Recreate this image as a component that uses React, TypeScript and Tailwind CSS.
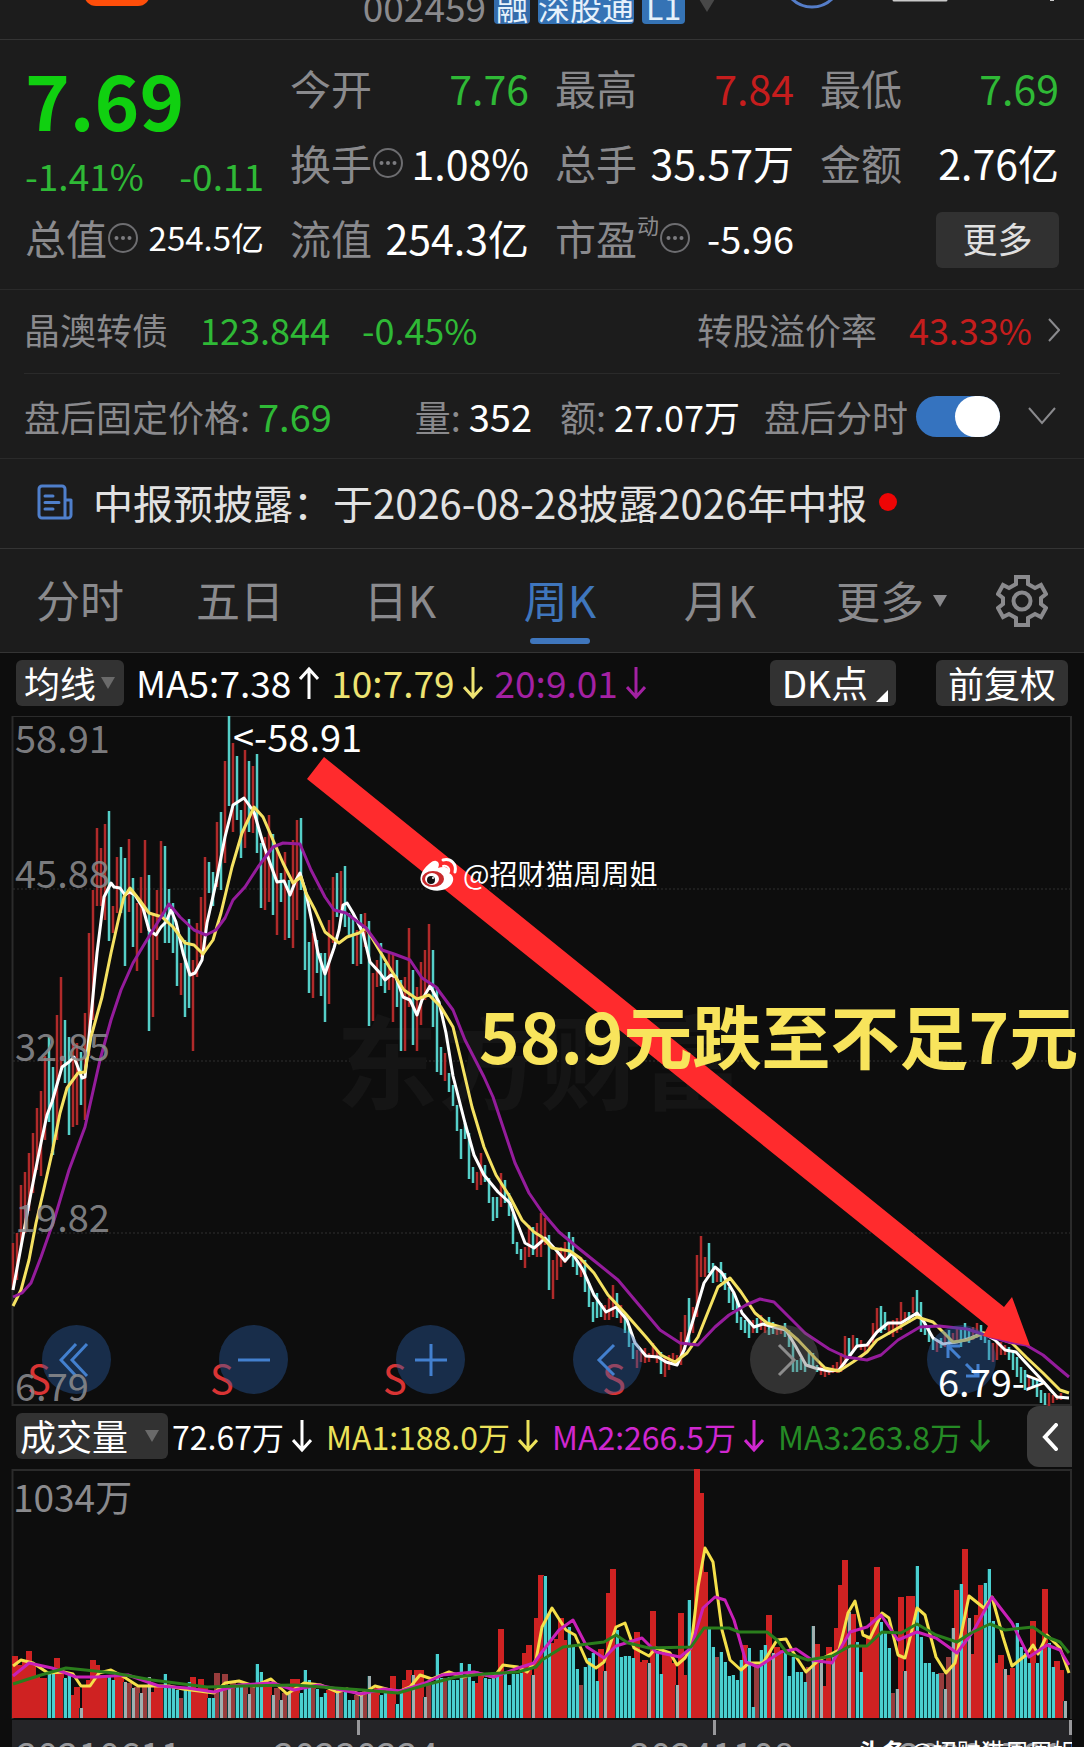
import { useState } from "react";
import type { ReactNode } from "react";

// weekly candles: colour, high, low (y in chart units)
const candles =
  "R527,574 R517,564 R469,531 R456,517 R437,495 R417,477 R392,454 R375,460 R340,424 C321,406 C351,439 R299,424 R261,354 C304,367 C321,419 R321,411 R327,409 C336,389 R297,404 R217,340 R174,304 R112,190 R132,190 R108,204 C95,225 R190,217 R141,197 C131,197 C142,250 R123,196 C162,231 R187,255 R161,217 R124,197 C159,315 R197,301 R174,244 R125,201 C130,227 C173,227 C187,237 C217,270 R247,279 C224,301 C203,292 R244,335 R207,261 R181,241 R141,234 C146,177 C156,190 R106,171 C96,174 R45,147 C0,90 R27,116 C40,104 C94,142 R34,132 C45,116 R50,117 C38,137 C127,192 R121,194 R99,186 C118,199 " +
  "R131,219 C157,186 R136,224 C164,222 R124,232 R104,204 C102,174 C171,254 C226,277 R217,282 C224,257 C237,280 C237,306 R204,288 R161,227 C157,201 R155,197 C150,211 C197,221 C201,248 R214,250 C198,248 R197,231 C205,310 R257,305 R244,271 C227,270 C247,277 R237,274 R239,306 C244,291 C264,335 R261,335 R212,291 C254,329 R271,335 R246,309 R234,284 R208,271 C234,311 C271,356 C331,359 R337,365 C357,376 C369,390 C389,415 C413,443 C407,423 C417,463 C451,467 R456,474 R437,469 C449,466 C462,487 C481,505 C481,502 R457,491 C464,487 C477,500 C497,528 C526,538 C533,544 R531,552 R509,541 C511,539 R507,541 " +
  "R497,541 R502,529 C519,574 R544,583 R537,564 R531,551 R526,547 C516,541 C521,551 C544,559 R541,561 C544,576 C567,591 C586,606 C577,602 C587,601 R589,604 R582,604 R569,601 C577,602 R589,607 C597,617 C611,631 C627,643 R634,652 R634,646 R632,647 R637,646 R627,642 R634,647 C636,658 R641,661 R639,654 R637,647 R639,649 R616,649 R599,634 C582,627 R591,617 R539,601 R520,561 R541,561 C527,557 C547,567 R552,566 C546,566 C557,574 C571,587 C577,594 C584,607 C601,614 C604,617 C604,622 R604,617 C602,617 R599,614 R604,617 C601,619 C606,618 R609,619 R611,618 C607,621 C614,631 C627,656 " +
  "C644,656 C642,654 C646,656 C634,651 C637,651 C649,656 R649,659 R651,661 R652,659 R649,657 R646,657 R637,656 R620,649 C622,639 R619,634 C622,632 R624,634 R629,637 R626,632 R607,627 R592,614 C590,617 C596,614 R606,619 R604,621 R602,617 R586,614 R596,609 C596,607 R581,597 C574,601 C586,616 C607,619 C611,626 C621,634 R624,636 C622,632 R616,631 C614,632 R617,627 R611,626 C611,631 C607,622 C612,627 R611,624 R607,622 C609,624 C616,627 C624,644 R627,646 R626,644 R626,639 R629,639 C631,644 C634,654 C641,661 C651,667 C654,674 R661,674 C661,671 C664,681 C674,687 C677,689 R677,690 R679,687 R679,684 R677,684";

// weekly volume: colour, top edge
const volumes =
  "R187 R198 R196 R193 R182 R194 R206 R209 R209 C203 C203 R189 R199 C209 C206 R226 R218 C239 R218 R211 R191 R196 R206 R206 C208 C211 R204 R208 C213 R214 C219 R218 C224 R218 C208 R223 R218 R218 C205 C216 C219 C221 R229 C219 C213 R208 R221 R210 R218 C229 C229 R204 C219 R205 C219 R214 C216 C218 R218 C225 R216 C195 C203 R214 R213 C226 R219 C231 R224 C224 R210 R210 C224 C201 C211 R214 C220 C228 C224 R221 R221 C224 R219 C223 C231 C231 R226 C223 R221 " +
  "C207 R221 R219 C226 C224 R219 R207 C235 C221 R211 R201 C206 R201 R201 C228 R214 C214 C185 C209 R209 C208 C211 C211 C194 R208 C195 C212 R214 R206 C209 C210 C209 C206 R160 C204 C216 C205 C205 C204 R184 R176 C206 R149 R106 C107 C144 R174 R170 R149 R171 C158 C176 C200 R216 C198 C189 C184 C212 R180 C202 R124 R100 C161 C188 C187 C187 C189 R163 R193 R191 C194 R142 C184 C205 R184 R184 R194 C216 R144 R206 C131 R164 R0 R24 R103 C159 C178 R188 C183 " +
  "C193 C207 C206 C211 C191 R176 C179 C238 R198 C181 C176 R146 C184 R178 R181 C182 C207 C188 C203 C203 C213 R198 C157 R175 C194 R217 R178 C188 R159 R116 R91 C143 R145 C173 C203 R178 R169 R148 R98 C153 C164 C179 R224 C220 R128 C202 R127 R127 C97 C168 C194 C194 C203 C205 R204 C220 R188 C159 R121 C115 R80 C149 R185 R146 R116 C114 C100 C152 R194 R186 C200 R206 R199 C154 C178 C184 C194 R152 C194 C179 R120 C174 C198 R192 R201 C232";

const ma5 =
  "13,574 31,477 41,427 47,399 52,386 62,351 69,346 74,341 82,362 85,361 91,301 97,237 104,181 111,167 114,171 120,172 125,179 129,176 135,179 143,192 149,214 156,219 161,211 166,206 171,194 176,206 183,237 190,259 195,257 202,244 207,207 216,167 225,121 233,89 244,82 249,89 254,96 263,127 270,147 277,166 284,165 290,179 296,164 300,157 306,177 313,211 318,237 325,258 334,232 339,214 343,189 347,187 353,197 363,217 370,246 380,257 385,264 391,259 396,261 403,281 410,284 417,299 422,284 430,270 439,286 446,317 453,360 465,407 474,439 484,459 498,476 510,487 518,509 525,527 534,532 541,526 545,522 556,534 565,545 572,537 583,554 594,579 606,596 616,591 627,604 635,627 646,640 658,641 666,646 677,649 684,634 694,601 704,567 715,551 722,557 734,577 742,597 754,611 763,608 777,612 786,614 796,631 806,649 815,652 829,655 839,654 848,642 857,630 867,629 877,616 888,607 901,607 917,597 924,606 933,622 943,628 957,626 971,622 983,617 995,624 1005,634 1016,636 1026,647 1040,662 1057,681 1069,682";
const ma10 =
  "13,590 21,574 29,544 36,507 43,477 52,437 60,397 67,372 78,357 85,356 91,321 102,281 111,237 119,201 124,181 130,172 138,182 149,197 162,201 173,211 185,227 194,229 203,238 213,224 221,197 232,151 242,117 254,91 263,101 273,124 283,147 293,167 301,161 306,177 315,194 325,216 339,227 347,221 359,217 366,212 375,227 391,254 404,274 417,283 429,279 441,291 453,311 461,344 465,361 472,391 484,431 496,459 510,481 522,504 534,516 542,521 552,532 570,535 580,542 594,557 608,579 625,597 646,621 661,639 675,646 687,637 698,621 708,596 718,571 730,562 741,576 755,597 767,607 784,612 798,624 815,642 825,652 839,655 853,646 867,636 877,624 898,612 917,601 933,606 953,626 967,624 984,617 1012,627 1026,641 1043,657 1060,674 1069,677";
const ma20 =
  "13,581 22,577 31,567 41,541 55,501 69,454 85,411 100,344 111,304 121,274 133,247 145,227 161,201 169,188 180,201 194,214 206,219 216,214 225,202 233,184 245,171 258,151 273,131 283,127 300,128 311,154 325,181 334,194 346,197 366,212 382,234 394,238 410,244 422,262 436,271 453,294 465,324 484,361 493,381 505,417 515,447 529,477 542,496 559,516 577,531 597,547 618,564 639,589 660,614 680,627 698,629 715,611 729,599 746,589 760,583 774,586 787,599 805,617 829,633 846,641 867,644 881,639 898,624 920,611 939,610 967,613 991,621 1009,626 1026,629 1043,639 1057,651 1069,661";

const volMa1 =
  "13,197 21,191 33,194 48,204 64,203 73,205 81,217 90,217 99,204 111,201 124,208 138,217 156,217 169,217 183,220 199,222 214,224 225,214 239,212 254,217 271,210 287,225 304,214 321,216 337,223 347,220 361,226 375,217 398,223 410,218 420,206 432,210 449,203 463,208 477,204 494,208 503,196 518,198 527,203 536,191 542,158 552,139 566,161 575,166 587,193 596,199 604,193 616,158 625,154 634,179 649,187 656,179 670,184 677,196 685,189 691,178 698,118 705,79 713,93 722,161 730,191 741,201 749,194 763,194 777,171 786,170 793,183 806,203 819,191 829,186 839,181 848,144 855,132 863,166 870,169 882,144 889,149 898,186 905,189 912,161 917,139 925,146 936,188 946,204 955,194 962,161 969,127 984,139 992,128 1003,168 1012,197 1026,186 1033,176 1038,185 1047,166 1060,179 1069,204";
const volMa2 =
  "13,207 29,194 52,199 76,208 97,208 128,206 159,217 187,219 214,223 239,216 273,214 294,221 318,216 361,225 384,220 401,222 425,214 442,206 474,203 494,208 518,199 534,194 542,183 559,161 573,151 587,178 604,189 616,177 642,169 656,183 680,188 691,179 703,139 715,128 725,131 734,151 746,193 758,198 781,183 796,180 812,191 832,194 850,163 867,158 881,146 898,171 917,163 936,169 957,184 974,161 992,128 1012,154 1029,188 1047,176 1060,181 1069,196";
const volMa3 =
  "13,215 41,206 66,199 114,204 152,211 207,218 242,217 294,216 363,221 398,224 429,215 456,208 484,205 518,203 536,198 542,191 563,178 604,173 616,166 628,174 649,179 691,178 704,159 729,159 739,163 767,163 777,171 787,184 808,191 832,187 850,177 867,177 882,163 901,164 917,155 936,166 957,173 971,164 990,155 1005,161 1033,158 1047,168 1060,173 1069,184";

const barX = (i: number) => 13 + i * 4;

const priceBars = candles.split(" ").map((s, i) => {
  const [high, low] = s.slice(1).split(",").map(Number);
  return { x: barX(i), up: s[0] === "R", high, low };
});

const volumeBars = volumes.split(" ").map((s, i, all) => {
  const up = s[0] === "R";
  // a bar with no neighbour of its own colour is drawn muted
  const alone = all[i - 1]?.[0] !== s[0] && all[i + 1]?.[0] !== s[0];
  return { x: barX(i), up, alone, top: Number(s.slice(1)) };
});

function volumeFill(up: boolean, alone: boolean, top: number) {
  if (up) return alone && top > 180 ? "#983c3c" : "#cf2222";
  return alone && top > 140 ? "#9fb0b0" : "#4ad0d0";
}

function MoreDots() {
  return (
    <svg viewBox="0 0 32 32" className="size-8 shrink-0" fill="none" stroke="#6d6d70" strokeWidth="2">
      <circle cx="16" cy="16" r="14" />
      <g fill="#7c7c80" stroke="none">
        <circle cx="9.500" cy="16" r="2" />
        <circle cx="16" cy="16" r="2" />
        <circle cx="22.500" cy="16" r="2" />
      </g>
    </svg>
  );
}

function Trend({ up = false }: { up?: boolean }) {
  return (
    <svg viewBox="0 0 20 34" className="h-[34px] w-5 shrink-0" fill="none" stroke="currentColor" strokeWidth="3">
      {up ? <path d="M10 33V3M1 13l9-10 9 10" /> : <path d="M10 1v30M1 21l9 10 9-10" />}
    </svg>
  );
}

function Caret({ className }: { className: string }) {
  return (
    <svg viewBox="0 0 14 12" className={className} fill="currentColor">
      <path d="M0 0h14L7 12z" />
    </svg>
  );
}

interface QuoteProps {
  label: ReactNode;
  value: string;
  tone?: string;
}

function Quote({ label, value, tone = "text-[41px] text-white" }: QuoteProps) {
  return (
    <div className="flex h-[75px] items-center justify-between pb-1 whitespace-nowrap">
      <span className="flex items-center text-[41px] text-[#8a8a8d]">{label}</span>
      <span className={tone}>{value}</span>
    </div>
  );
}

const green = "text-[41px] text-[#2fb936]";
const red = "text-[41px] text-[#c51d1d]";

function Header() {
  return (
    <header className="relative flex h-10 items-end justify-center overflow-hidden border-b border-[#343434] pb-[15px]">
      <div className="absolute -top-8 left-[84px] h-[38px] w-[66px] rounded-xl bg-[#ff4e0a]" />
      <div className="flex items-end gap-2 text-[37px] leading-9">
        <span className="text-[#8a8a8d]">002459</span>
        <span className="rounded bg-[#356cab] px-[2px] text-[32px] text-[#e6f1fb]">融</span>
        <span className="rounded bg-[#3573b5] text-[32px] text-[#e6f1fb]">深股通</span>
        <span className="rounded bg-[#3573b5] px-1 text-[32px] text-[#e6f1fb]">L1</span>
        <svg viewBox="0 0 22 28" className="h-9 w-7 pb-3" fill="#484848">
          <path d="M0 10h22L11 28z" />
        </svg>
      </div>
      <svg viewBox="0 0 260 10" className="absolute top-0 right-7 h-[10px] w-[260px] overflow-visible" fill="none">
        <circle cx="16" cy="-22" r="29" stroke="#557dc8" strokeWidth="3" />
        <path d="M98 0h52" stroke="#c9c9c9" strokeWidth="3" strokeLinecap="round" />
        <path d="M254 0h4" stroke="#c9c9c9" strokeWidth="2" />
      </svg>
    </header>
  );
}

function Quotes() {
  return (
    <section className="grid grid-cols-4 gap-x-[26px] border-b border-[#2a2a2a] px-[25px] py-3">
      <div className="row-span-2 whitespace-nowrap">
        <p className="flex h-[96px] items-center pb-1 text-[76px] font-bold text-[#10d010]">7.69</p>
        <p className="flex h-[54px] items-center justify-between text-[37px] text-[#2fb936]">
          <span>-1.41%</span>
          <span>-0.11</span>
        </p>
      </div>
      <Quote label="今开" value="7.76" tone={green} />
      <Quote label="最高" value="7.84" tone={red} />
      <Quote label="最低" value="7.69" tone={green} />
      <Quote label={<>换手<MoreDots /></>} value="1.08%" />
      <Quote label="总手" value="35.57万" />
      <Quote label="金额" value="2.76亿" />
      <Quote label={<>总值<MoreDots /></>} value="254.5亿" tone="text-[33px] text-white" />
      <Quote label="流值" value="254.3亿" />
      <Quote
        label={
          <>
            市盈
            <span className="self-start text-[22px] leading-6">动</span>
            <MoreDots />
          </>
        }
        value="-5.96"
        tone="text-[38px] text-white"
      />
      <div className="flex h-[75px] items-center justify-end">
        <button type="button" className="h-14 w-[123px] rounded-md bg-[#313131] pb-1 text-[35px] leading-none text-[#e0e0e0]">
          更多
        </button>
      </div>
    </section>
  );
}

function BondRow() {
  return (
    <a href="#bond" className="mx-6 flex h-[84px] items-center border-b border-[#2a2a2a] pb-1 text-[36px] whitespace-nowrap text-[#2fb936]">
      <span className="text-[#8a8a8d]">晶澳转债</span>
      <span className="ml-8">123.844</span>
      <span className="ml-8">-0.45%</span>
      <span className="ml-auto text-[#8a8a8d]">转股溢价率</span>
      <span className="ml-8 text-[#c51d1d]">43.33%</span>
      <svg viewBox="0 0 12 24" className="ml-4 h-6 w-3" fill="none" stroke="#8a8a8d" strokeWidth="2">
        <path d="M1 1l10 11L1 23" />
      </svg>
    </a>
  );
}

function AfterHours() {
  const [on, setOn] = useState(true);
  return (
    <div className="flex h-[85px] items-center border-b border-[#2a2a2a] pr-7 pl-6 text-[36px] whitespace-nowrap text-[#8a8a8d]">
      <span>盘后固定价格:</span>
      <span className="ml-2 text-[38px] text-[#2fb936]">7.69</span>
      <span className="ml-auto">量:</span>
      <span className="ml-2 text-[38px] text-white">352</span>
      <span className="ml-7">额:</span>
      <span className="ml-2 text-white">27.07万</span>
      <label className="ml-6 flex items-center gap-2">
        盘后分时
        <span className="relative flex h-[41px] w-[84px] rounded-full bg-[#3573bf]">
          <input
            type="checkbox"
            checked={on}
            onChange={(e) => setOn(e.target.checked)}
            className="peer absolute inset-0 appearance-none"
          />
          <span className="h-[41px] w-[45px] rounded-full bg-white peer-checked:ml-auto" />
        </span>
      </label>
      <svg viewBox="0 0 28 18" className="ml-7 h-[18px] w-7" fill="none" stroke="#8a8a8d" strokeWidth="2">
        <path d="M1 1l13 15L27 1" />
      </svg>
    </div>
  );
}

function Notice() {
  return (
    <a href="#notice" className="flex h-[90px] items-center border-b border-[#343434] pb-1 pl-[37px] text-[40px] whitespace-nowrap text-[#e2e2e2]">
      <svg viewBox="0 0 36 36" className="mr-5 size-9" fill="none" stroke="#4f7fcb" strokeWidth="3" strokeLinejoin="round">
        <path d="M28 34V5a3 3 0 0 0-3-3H5a3 3 0 0 0-3 3v26a3 3 0 0 0 3 3h26a3 3 0 0 0 3-3V16h-6" />
        <path d="M8 12h8M8 18.500h14M8 25h8" strokeLinecap="round" />
      </svg>
      <span>中报预披露：于2026-08-28披露2026年中报</span>
      <span className="ml-3 size-[18px] rounded-full bg-[#ee0505]" />
    </a>
  );
}

const tabs = ["分时", "五日", "日K", "周K", "月K"];

function Tabs() {
  const [active, setActive] = useState("周K");
  return (
    <nav className="flex h-[104px] border-b border-[#343434] text-[44px] text-[#8a8a8d]">
      {tabs.map((tab) => (
        <button
          key={tab}
          type="button"
          onClick={() => setActive(tab)}
          className={
            tab === active
              ? "flex flex-1 flex-col items-center text-[#3f76bd] after:h-[6px] after:w-[60px] after:rounded-full after:bg-[#3f76bd]"
              : "flex flex-1 flex-col items-center"
          }
        >
          <span className="pt-3 leading-[77px]">{tab}</span>
        </button>
      ))}
      <button type="button" className="flex flex-1 items-center justify-center">
        <span className="flex items-center gap-2 pl-6">
          更多
          <Caret className="h-3 w-4" />
        </span>
      </button>
      <button type="button" aria-label="设置" className="flex w-[124px] items-center justify-center">
        <svg viewBox="0 0 52 52" className="size-[52px]" fill="none" stroke="#8a8a8d" strokeWidth="4">
          <path d="M20 2h12v7l7 4 6-3 5 9-5 4v6l5 4-5 9-6-3-7 4v7H20v-7l-7-4-6 3-5-9 5-4v-6l-5-4 5-9 6 3 7-4z" />
          <circle cx="26" cy="26" r="8.500" />
        </svg>
      </button>
    </nav>
  );
}

const chip = "flex h-[46px] items-center rounded-md bg-[#323232] text-white";

function IndicatorBar() {
  return (
    <div className="flex h-[63px] items-center px-4 pb-1 text-[37px] whitespace-nowrap text-white">
      <button type="button" className={`${chip} gap-1 px-2 text-[36px]`}>
        均线
        <Caret className="h-3 w-4 text-[#6a6a6a]" />
      </button>
      <span className="ml-3 flex items-center gap-2">
        MA5:7.38
        <Trend up />
      </span>
      <span className="ml-3 flex items-center gap-2 text-[#eee372]">
        10:7.79
        <Trend />
      </span>
      <span className="ml-3 flex items-center gap-2 text-[#a321a3]">
        20:9.01
        <Trend />
      </span>
      <button type="button" className={`${chip} ml-auto gap-2 pr-2 pl-3`}>
        DK点
        <svg viewBox="0 0 12 12" className="mb-1 size-3 self-end" fill="#fff">
          <path d="M12 0v12H0z" />
        </svg>
      </button>
      <button type="button" className={`${chip} ml-10 px-3 text-[36px]`}>
        前复权
      </button>
    </div>
  );
}

const roundBtn = "flex size-[69px] items-center justify-center rounded-full bg-[#2a5ea8]/40";
const glyph = "size-9";

function PriceChart() {
  return (
    <div className="relative">
      <svg viewBox="0 0 1084 690" className="block w-full">
        <path d="M12.500 0V689H1071V0z" fill="none" stroke="#2b2b2b" strokeWidth="2" />
        <g stroke="#303030" strokeDasharray="2 2">
          <path d="M13 173H1070M13 345H1070M13 517H1070" />
        </g>
        <text x="336" y="386" fontSize="102" fontWeight="700" fill="#151515">
          东方财富
        </text>
        {priceBars.map((b) => (
          <path key={b.x} d={`M${b.x} ${b.high}V${b.low}`} stroke={b.up ? "#b02a2a" : "#55cfc8"} strokeWidth="2.500" />
        ))}
        <g fill="none" strokeWidth="3" strokeLinejoin="round">
          <polyline points={ma5} stroke="#fff" />
          <polyline points={ma10} stroke="#f5e262" />
          <polyline points={ma20} stroke="#951c9c" />
        </g>
        <g fill="#d93434" fontSize="40">
          <text x="27" y="678">S</text>
          <text x="210" y="678">S</text>
          <text x="383" y="678">S</text>
          <text x="602" y="678">S</text>
        </g>
      </svg>

      <div className="absolute bottom-3 left-[42px] flex gap-[108px]">
        <button type="button" aria-label="最早" className={roundBtn}>
          <svg viewBox="0 0 36 36" className={glyph} fill="none" stroke="#4380cf" strokeWidth="3">
            <path d="M17 2L2 18l15 16M28 2L13 18l15 16" />
          </svg>
        </button>
        <button type="button" aria-label="缩小" className={roundBtn}>
          <svg viewBox="0 0 36 36" className={glyph} fill="none" stroke="#4380cf" strokeWidth="3">
            <path d="M2 18h32" />
          </svg>
        </button>
        <button type="button" aria-label="放大" className={roundBtn}>
          <svg viewBox="0 0 36 36" className={glyph} fill="none" stroke="#4380cf" strokeWidth="3">
            <path d="M2 18h32M18 2v32" />
          </svg>
        </button>
        <button type="button" aria-label="向左" className={roundBtn}>
          <svg viewBox="0 0 36 36" className={glyph} fill="none" stroke="#4380cf" strokeWidth="3">
            <path d="M24 3L9 18l15 15" />
          </svg>
        </button>
        <button type="button" aria-label="向右" className="flex size-[69px] items-center justify-center rounded-full bg-[#6b6b6b]/40">
          <svg viewBox="0 0 36 36" className={glyph} fill="none" stroke="#8c8c8c" strokeWidth="3">
            <path d="M12 3l15 15-15 15" />
          </svg>
        </button>
        <button type="button" aria-label="全屏" className={roundBtn}>
          <svg viewBox="0 0 36 36" className={glyph} fill="none" stroke="#4380cf" strokeWidth="3">
            <path d="M4 16V4h12M4 4l12 12M34 22v12H22M34 34L22 22" />
          </svg>
        </button>
      </div>

      <svg viewBox="0 0 1084 690" className="pointer-events-none absolute inset-0 w-full">
        <g fill="#8a8a8d" fillOpacity="0.9" fontSize="38">
          <text x="15" y="37">58.91</text>
          <text x="15" y="172">45.88</text>
          <text x="15" y="345">32.85</text>
          <text x="15" y="516">19.82</text>
          <text x="15" y="685">6.79</text>
        </g>
        <g fill="#fff" fontSize="38">
          <text x="233" y="36">&lt;-58.91</text>
          <text x="938" y="681">6.79-&gt;</text>
        </g>
        <path d="M324 41L1004 591 1012 581 1030 630 983 620 988 610 307 63z" fill="#ff2b2d" />
        <text x="479" y="348" fontSize="69" fontWeight="700" fill="#f8e45c">
          58.9元跌至不足7元
        </text>
        <g fill="none" stroke="#fff">
          <path d="M443 144c8-2 14 4 12 12" strokeWidth="3" strokeLinecap="round" />
          <path d="M443 150c4-1 7 2 6 6" strokeWidth="2" strokeLinecap="round" />
        </g>
        <path d="M436 145c4 1 3 5 2 7 6-2 12-1 11 5 6 3 5 9 1 13-6 6-18 6-25 1-7-5-5-13 0-19 4-4 8-8 11-7z" fill="#fff" />
        <ellipse cx="433" cy="163" rx="11" ry="8" fill="#c92a2c" />
        <ellipse cx="432" cy="163" rx="7" ry="6" fill="#fff" />
        <circle cx="431" cy="164" r="4" fill="#111" />
        <circle cx="433" cy="162" r="1" fill="#fff" />
        <text x="463" y="169" fontSize="28" fill="#fff">
          @招财猫周周姐
        </text>
      </svg>
    </div>
  );
}

function VolumeBar() {
  return (
    <div className="flex h-[63px] items-center pr-3 pb-1 pl-4 text-[32px] whitespace-nowrap text-white">
      <button type="button" className={`${chip} w-[152px] justify-between pr-2 pl-1 text-[36px]`}>
        成交量
        <Caret className="h-3 w-4 text-[#6a6a6a]" />
      </button>
      <span className="ml-1 flex items-center gap-2">
        72.67万
        <Trend />
      </span>
      <span className="ml-[14px] flex items-center gap-2 text-[#ece25a]">
        MA1:188.0万
        <Trend />
      </span>
      <span className="ml-[14px] flex items-center gap-2 text-[#cf27cf]">
        MA2:266.5万
        <Trend />
      </span>
      <span className="ml-[14px] flex items-center gap-2 text-[#258a25]">
        MA3:263.8万
        <Trend />
      </span>
      <button type="button" aria-label="展开" className="ml-auto flex h-[61px] w-[45px] items-center justify-center self-start rounded-l-xl bg-[#3c3c3c]">
        <svg viewBox="0 0 16 28" className="h-7 w-4" fill="none" stroke="#fff" strokeWidth="4" strokeLinecap="round">
          <path d="M14 2L3 14l11 12" />
        </svg>
      </button>
    </div>
  );
}

function VolumeChart() {
  const up = volumeBars.filter((b) => b.up);
  const down = volumeBars.filter((b) => !b.up);
  return (
    <svg viewBox="0 0 1084 251" className="block w-full">
      <path d="M12.500 250V1H1071V250" fill="none" stroke="#2b2b2b" strokeWidth="2" />
      {up.map((b) => (
        <rect key={b.x} x={Math.max(b.x - 3, 12)} y={b.top} width="6" height={249 - b.top} fill={volumeFill(true, b.alone, b.top)} />
      ))}
      {down.map((b) => (
        <g key={b.x}>
          <rect x={b.x - 2} y={b.top} width="4" height={249 - b.top} fill="#0d3f40" />
          <rect x={b.x - 1} y={b.top} width="3" height={249 - b.top} fill={volumeFill(false, b.alone, b.top)} />
        </g>
      ))}
      <g fill="none" strokeWidth="3" strokeLinejoin="round">
        <polyline points={volMa1} stroke="#f5e04a" />
        <polyline points={volMa2} stroke="#c920b8" />
        <polyline points={volMa3} stroke="#2a7d1c" />
      </g>
      <text x="13" y="43" fontSize="37" fill="#8a8a8d">
        1034万
      </text>
    </svg>
  );
}

function DateAxis() {
  return (
    <div className="mx-3 h-[27px] overflow-hidden bg-[#242427]">
      <svg viewBox="0 0 1060 27" className="block w-full" fill="#98989b">
        <path d="M345 0h3v15h-3zM701 0h3v15h-3zM1057 0h3v15h-3z" />
        <g fontSize="37">
          <text x="5" y="49">20210611</text>
          <text x="262" y="49">20230224</text>
          <text x="618" y="49">20241108</text>
          <text x="887" y="49">20260701</text>
        </g>
        <g fontSize="24" fill="#fff">
          <text x="846" y="41" fontWeight="700">头条</text>
          <text x="898" y="41">@招财猫周周姐</text>
        </g>
      </svg>
    </div>
  );
}

export default function App() {
  return (
    <main className="min-h-screen overflow-hidden bg-[#1c1c1c] font-['Noto_Sans_CJK_SC',sans-serif] leading-tight">
      <Header />
      <Quotes />
      <BondRow />
      <AfterHours />
      <Notice />
      <Tabs />
      <section className="bg-[#0d0d0d]">
        <IndicatorBar />
        <PriceChart />
        <VolumeBar />
        <VolumeChart />
        <DateAxis />
      </section>
    </main>
  );
}
